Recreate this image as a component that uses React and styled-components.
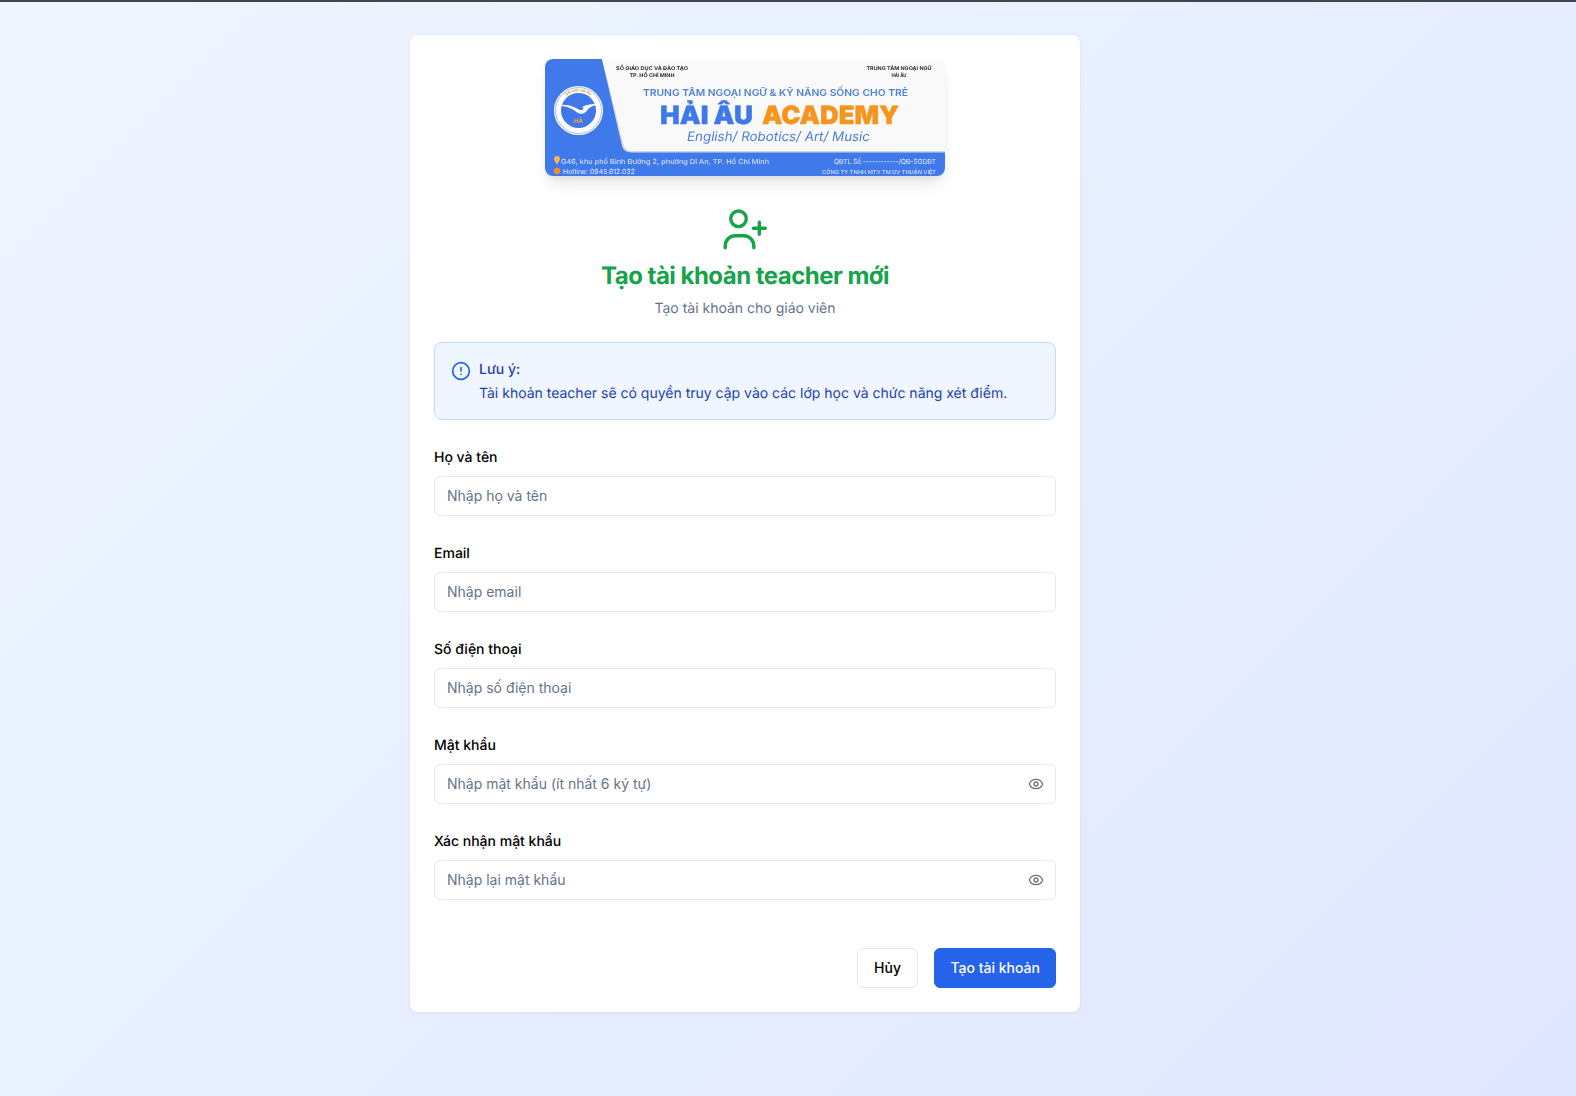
import React from 'react';
import styled, { createGlobalStyle } from 'styled-components';
import { CircleAlert, Eye } from 'lucide-react';

const Global = createGlobalStyle`
  html, body { margin: 0; padding: 0; }
  body { font-family: Inter, "Noto Sans", sans-serif; color: #020817; background: #e6ebfd; text-rendering: geometricPrecision; }
  * { box-sizing: border-box; }
`;
const TopBar = styled.div`height: 2px; background: #44444c;`;
const Page = styled.main`
  min-height: 1094px;
  padding: 33px 0 0 410px;
  background: linear-gradient(135deg, #eff6ff 0%, #e0e7ff 100%);
`;
const Card = styled.form`
  width: 670px;
  padding: 24px;
  background: #fff;
  border-radius: 8px;
  box-shadow: 0 0 0 1px rgba(226,232,240,.35), 0 1px 3px rgba(15,23,42,.08);
`;
const BannerWrap = styled.div`
  width: 400px;
  height: 117px;
  margin: 0 auto;
  border-radius: 8px;
  overflow: hidden;
  box-shadow: 0 10px 15px -3px rgba(0,0,0,.1), 0 4px 6px -4px rgba(0,0,0,.1);
`;
const Header = styled.header`
  display: flex;
  flex-direction: column;
  align-items: center;
  margin-top: 30px;
`;
const Title = styled.h1`
  margin: 6px 0 0;
  font-size: 24px;
  line-height: 32px;
  font-weight: 700;
  letter-spacing: -0.52px;
  color: #16a34a;
`;
const Subtitle = styled.p`
  margin: 7px 0 0;
  font-size: 14px;
  line-height: 20px;
  color: #64748b;
`;
const Notice = styled.div`
  display: flex;
  gap: 8px;
  margin-top: 23px;
  height: 78px;
  padding: 15px 16px;
  background: #eff6ff;
  border: 1px solid #bfdbfe;
  border-radius: 8px;
  color: #1e40af;
  font-size: 14px;
  line-height: 24px;
  svg { flex: none; margin-top: 3px; color: #2563eb; }
`;
const NoticeTitle = styled.div`font-weight: 500;`;
const Field = styled.div`margin-top: 24px;`;
const Label = styled.label`
  display: block;
  height: 24px;
  padding-top: 2px;
  font-size: 14px;
  line-height: 24px;
  font-weight: 500;
  color: #000;
  margin-bottom: 8px;
`;
const InputWrap = styled.div`position: relative;`;
const Input = styled.input`
  display: block;
  width: 100%;
  height: 40px;
  padding: 0 12px 2px;
  background: #fff;
  border: 1px solid #e2e8f0;
  border-radius: 6px;
  font: 400 14px Inter, sans-serif;
  color: #020817;
  outline: none;
  &::placeholder { color: #64748b; opacity: 1; }
`;
const EyeButton = styled.button`
  position: absolute;
  top: 12px;
  right: 12px;
  display: flex;
  padding: 0;
  border: 0;
  background: none;
  color: #6b7280;
`;
const Actions = styled.div`
  display: flex;
  justify-content: flex-end;
  gap: 16px;
  margin-top: 48px;
`;
const Button = styled.button`
  height: 40px;
  padding: 0 ${p => (p.$primary ? '15px' : '16.5px')} 2px;
  border-radius: 6px;
  border: 1px solid ${p => (p.$primary ? '#2563eb' : '#e2e8f0')};
  background: ${p => (p.$primary ? '#2563eb' : '#fff')};
  color: ${p => (p.$primary ? '#fff' : '#000')};
  font: 500 14px Inter, sans-serif;
`;

const BF = "Inter, 'Liberation Sans', sans-serif";
const fit = { lengthAdjust: 'spacingAndGlyphs' };
const Banner = () => (
  <svg width="400" height="117" viewBox="0 0 400 117" style={{ display: 'block', filter: 'blur(0.3px)' }}>
    <rect width="400" height="117" fill="#4079ea" />
    <path d="M57 0H400V93.5H86Q79 93.5 77 87Z" fill="#cfd7e6" />
    <path d="M57 0H400V92H87Q80.500 92 78.500 86Z" fill="#f9f9f9" />
    <g fontFamily={BF} textAnchor="middle" fill="#2b2c33" fontWeight="700" fontSize="5">
      <text x="107" y="11" textLength="72" {...fit}>SỐ GIÁO DỤC VÀ ĐÀO TẠO</text>
      <text x="107" y="18" textLength="45" {...fit}>TP. HỒ CHÍ MINH</text>
      <text x="354" y="11" textLength="65" {...fit}>TRUNG TÂM NGOẠI NGỮ</text>
      <text x="354" y="18" textLength="15" {...fit}>HẢI ÂU</text>
    </g>
    <text x="98" y="37" fontFamily={BF} fontSize="9.500" fontWeight="600" fill="#4e82d6" textLength="265" {...fit}>TRUNG TÂM NGOẠI NGỮ &amp; KỸ NĂNG SỐNG CHO TRẺ</text>
    <text x="115" y="65" fontFamily={BF} fontSize="25" fontWeight="900" fill="#3f78ea" stroke="#3f78ea" strokeWidth=".4" textLength="93" {...fit}>HẢI ÂU</text>
    <text x="217" y="65" fontFamily={BF} fontSize="25" fontWeight="900" fill="#f7941d" stroke="#f7941d" strokeWidth=".4" textLength="137" {...fit}>ACADEMY</text>
    <text x="142" y="82" fontFamily={BF} fontSize="13" fontStyle="italic" fill="#4a7fd8" textLength="183" {...fit}>English/ Robotics/ Art/ Music</text>
    <g fontFamily={BF} fill="#e9f0fd">
      <text x="16" y="105" fontSize="7" textLength="208" {...fit}>G46, khu phố Bình Đường 2, phường Dĩ An, TP. Hồ Chí Minh</text>
      <text x="18" y="115" fontSize="7" textLength="72" {...fit}>Hotline: 0945.612.032</text>
      <text x="289" y="105" fontSize="7" textLength="102" {...fit}>QĐTL Số ------------/QĐ-SGDĐT</text>
      <text x="277" y="115" fontSize="5.500" textLength="114" {...fit}>CÔNG TY TNHH MTV TM DV THUẬN VIỆT</text>
    </g>
    <path d="M12 97a3 3 0 0 1 3 3c0 2-2 3-3 6c-1-3-3-4-3-6a3 3 0 0 1 3-3Z" fill="#f7b45a" />
    <circle cx="12" cy="112" r="3.200" fill="#f08c2c" />
    <g>
      <circle cx="33.500" cy="51.500" r="24.500" fill="#fff" />
      <circle cx="33.500" cy="51.500" r="23" fill="none" stroke="#4079ea" strokeWidth=".5" />
      <circle cx="33.500" cy="51.500" r="17.500" fill="#3f78ea" />
      <path id="logoArc" d="M14.500 47.500A19.500 19.500 0 0 1 52.500 47.500" fill="none" />
      <text fontFamily={BF} fontSize="3.200" fontWeight="700" fill="#e98a23">
        <textPath href="#logoArc" startOffset="50%" textAnchor="middle">ĐẠI VIỆT HẢI ÂU</textPath>
      </text>
      <path d="M11 46C19 45 26 46 31 49C34 51 37 52 39 50C37 49 37 48 39 47C43 46 50 44 56 44C50 46 45 48 43 50C41 54 37 56 33 54C29 51 26 49 20 47.500C17 46.800 14 46.500 11 46Z" fill="#fff" />
      <text x="33.500" y="63.500" fontFamily={BF} textAnchor="middle" fontSize="6" fontWeight="800" fill="#f2a341">HÀ</text>
    </g>
  </svg>
);

const UserPlusIcon = () => (
  <svg width="48" height="48" viewBox="0 0 48 48" fill="none" stroke="#16a34a" strokeWidth="3.400" strokeLinecap="round" strokeLinejoin="round">
    <circle cx="17.500" cy="12.800" r="7.800" />
    <path d="M4.200 41.800v-2a10 10 0 0 1 10-10h8.600a10 10 0 0 1 10 10v2" />
    <path d="M38.300 16.300v12M32.300 22.300h12" />
  </svg>
);

const fields = [
  ['Họ và tên', 'Nhập họ và tên', 'text'],
  ['Email', 'Nhập email', 'email'],
  ['Số điện thoại', 'Nhập số điện thoại', 'tel'],
  ['Mật khẩu', 'Nhập mật khẩu (ít nhất 6 ký tự)', 'password'],
  ['Xác nhận mật khẩu', 'Nhập lại mật khẩu', 'password'],
];

export default function App() {
  return (
    <>
      <Global />
      <TopBar />
      <Page>
        <Card onSubmit={e => e.preventDefault()}>
          <BannerWrap><Banner /></BannerWrap>
          <Header>
            <UserPlusIcon />
            <Title>Tạo tài khoản teacher mới</Title>
            <Subtitle>Tạo tài khoản cho giáo viên</Subtitle>
          </Header>
          <Notice>
            <CircleAlert size={20} strokeWidth={2} />
            <div>
              <NoticeTitle>Lưu ý:</NoticeTitle>
              <div>Tài khoản teacher sẽ có quyền truy cập vào các lớp học và chức năng xét điểm.</div>
            </div>
          </Notice>
          {fields.map(([label, ph, type]) => (
            <Field key={label}>
              <Label>{label}</Label>
              <InputWrap>
                <Input type={type} placeholder={ph} />
                {type === 'password' && <EyeButton type="button"><Eye size={16} strokeWidth={2} /></EyeButton>}
              </InputWrap>
            </Field>
          ))}
          <Actions>
            <Button type="button">Hủy</Button>
            <Button type="submit" $primary>Tạo tài khoản</Button>
          </Actions>
        </Card>
      </Page>
    </>
  );
}
